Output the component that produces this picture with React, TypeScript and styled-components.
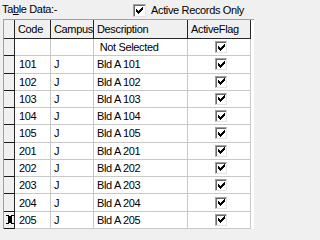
import React from "react";
import styled, { createGlobalStyle } from "styled-components";

const GlobalStyle = createGlobalStyle`
  html, body {
    margin: 0;
    padding: 0;
    background: #f0f0f0;
  }
  body {
    font-family: "Liberation Sans", Arial, sans-serif;
    font-size: 11px;
    letter-spacing: -0.35px;
    color: #000;
    overflow: hidden;
  }
`;

interface Row {
  code: string;
  campus: string;
  description: string;
  active: boolean;
}

const rows: Row[] = [
  { code: "", campus: "", description: "\u00a0Not Selected", active: true },
  ...["101", "102", "103", "104", "105", "201", "202", "203", "204", "205"].map(
    (code) => ({ code, campus: "J", description: `Bld A ${code}`, active: true })
  ),
];

const TopBar = styled.div`
  display: flex;
  align-items: center;
  height: 19px;
  padding-left: 2px;
`;

const Label = styled.span`
  flex: 0 0 131px;
  line-height: 19px;
  u {
    text-decoration: underline;
    text-underline-offset: 1px;
  }
`;

const Filter = styled.label`
  display: flex;
  align-items: center;
  gap: 5px;
  padding-top: 1px;
`;

const Box = styled.span<{ $size: number }>`
  display: inline-flex;
  align-items: center;
  justify-content: center;
  box-sizing: border-box;
  width: ${(p) => p.$size}px;
  height: ${(p) => p.$size}px;
  background: #fff;
  border: 1px solid;
  border-color: #a0a0a0 #e3e3e3 #e3e3e3 #a0a0a0;
  box-shadow: inset 1px 1px 0 #696969;
`;

const Grid = styled.div`
  display: grid;
  grid-template-columns: 11px 36px 43px 94px 63px;
  grid-template-rows: 19px;
  grid-auto-rows: 17.27px;
  width: 250px;
  margin-left: 3px;
  background: #fff;
  border-left: 1px solid #a0a0a0;
  border-top: 1px solid #a0a0a0;
`;

const HeadCell = styled.div`
  box-sizing: border-box;
  display: flex;
  align-items: center;
  padding-left: 3px;
  background: #f0f0f0;
  border-right: 1px solid #262626;
  border-bottom: 1px solid #262626;
  white-space: nowrap;
  overflow: hidden;
`;

const Selector = styled.div`
  box-sizing: border-box;
  display: flex;
  align-items: center;
  justify-content: center;
  padding-left: 1px;
  background: #f0f0f0;
  border-right: 1px solid #262626;
  border-bottom: 1px solid #1a1a1a;
`;

const Cell = styled.div<{ $center?: boolean; $pad?: number }>`
  box-sizing: border-box;
  display: flex;
  align-items: center;
  justify-content: ${(p) => (p.$center ? "center" : "flex-start")};
  padding-left: ${(p) => p.$pad ?? 3}px;
  border-right: 1px solid #c8c8c8;
  border-bottom: 1px solid #c8c8c8;
  white-space: nowrap;
  overflow: hidden;
`;

const Tick = ({ size = 7 }: { size?: number }) => {
  const px: [number, number][] = [
    [6, 0],
    [5, 1], [6, 1],
    [0, 2], [4, 2], [5, 2], [6, 2],
    [0, 3], [1, 3], [3, 3], [4, 3], [5, 3],
    [0, 4], [1, 4], [2, 4], [3, 4], [4, 4],
    [1, 5], [2, 5], [3, 5],
    [2, 6],
  ];
  return (
    <svg width={size} height={size} viewBox="0 0 7 7" shapeRendering="crispEdges">
      {px.map(([x, y]) => (
        <rect key={`${x}-${y}`} x={x} y={y} width={1} height={1} fill="#000" />
      ))}
    </svg>
  );
};

const IBeam = () => (
  <svg width="8" height="9" viewBox="0 0 8 9" shapeRendering="crispEdges">
    <path d="M0 0h3v1h2v-1h3v1h-2v7h2v1h-3v-1h-2v1h-3v-1h2v-7h-2z" fill="#000" />
  </svg>
);

export default function App() {
  return (
    <>
      <GlobalStyle />
      <TopBar>
        <Label>
          Ta<u>b</u>le Data:-
        </Label>
        <Filter>
          <Box $size={13}>
            <Tick />
          </Box>
          Active Records Only
        </Filter>
      </TopBar>
      <Grid>
        <HeadCell />
        <HeadCell>Code</HeadCell>
        <HeadCell>Campus</HeadCell>
        <HeadCell>Description</HeadCell>
        <HeadCell>ActiveFlag</HeadCell>
        {rows.map((r, i) => (
          <React.Fragment key={i}>
            <Selector>{i === rows.length - 1 ? <IBeam /> : null}</Selector>
            <Cell $pad={4}>{r.code}</Cell>
            <Cell>{r.campus}</Cell>
            <Cell>{r.description}</Cell>
            <Cell $center $pad={4}>
              <Box $size={12}>{r.active ? <Tick /> : null}</Box>
            </Cell>
          </React.Fragment>
        ))}
      </Grid>
    </>
  );
}
